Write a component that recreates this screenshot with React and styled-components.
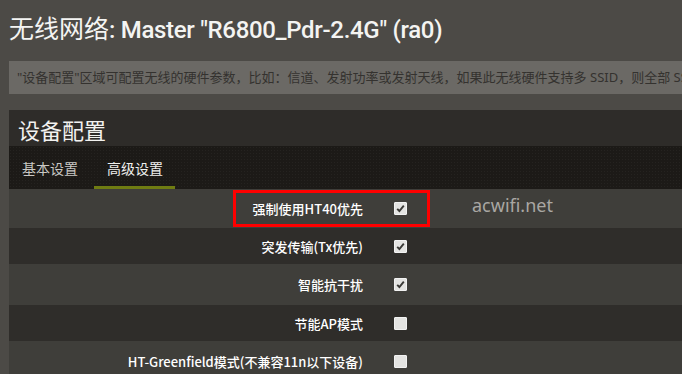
import styled, { createGlobalStyle } from 'styled-components';

const GlobalStyle = createGlobalStyle`
  html, body {
    margin: 0;
    padding: 0;
    background: #4c4a46;
    overflow: hidden;
  }
  body {
    font-family: "Noto Sans", "Noto Sans CJK SC", sans-serif;
  }
`;

const rows = [
  { label: '强制使用HT40优先', checked: true, height: 39 },
  { label: '突发传输(Tx优先)', checked: true, height: 36 },
  { label: '智能抗干扰', checked: true, height: 41 },
  { label: '节能AP模式', checked: false, height: 36 },
  { label: 'HT-Greenfield模式(不兼容11n以下设备)', checked: false, height: 40 },
];

function Checkbox({ checked }) {
  return (
    <Box>
      {checked && (
        <svg width="9" height="9" viewBox="0 0 9 9">
          <path d="M1.2 4.8 L3.4 7 L7.8 1.6" fill="none" stroke="#3a3936" strokeWidth="1.9" />
        </svg>
      )}
    </Box>
  );
}

function App() {
  return (
    <>
      <GlobalStyle />
      <Page>
        <Title>
          <Cjk>无线网络</Cjk>: Master "R6800_Pdr-2.4G" (ra0)
        </Title>
        <Description>
          "设备配置"区域可配置无线的硬件参数，比如：信道、发射功率或发射天线，如果此无线硬件支持多 SSID，则全部 SSID 将共享此设备配置。
        </Description>
        <Section>
          <SectionHeader>设备配置</SectionHeader>
          <Tabs>
            <Tab>基本设置</Tab>
            <Tab $active>高级设置</Tab>
          </Tabs>
          <Rows>
            {rows.map((row, i) => (
              <Row key={row.label} $odd={i % 2 === 1} $h={row.height}>
                <Label>{row.label}</Label>
                <Field>
                  <Checkbox checked={row.checked} />
                </Field>
              </Row>
            ))}
            <Highlight />
            <Watermark>acwifi.net</Watermark>
          </Rows>
        </Section>
      </Page>
    </>
  );
}

const Page = styled.div`
  width: 780px;
  padding: 0 0 0 9px;
`;

const Title = styled.h2`
  margin: 0;
  padding: 9px 0 0 0;
  height: 47px;
  box-sizing: border-box;
  font-family: Roboto, "Noto Sans CJK SC", sans-serif;
  font-weight: 500;
  font-size: 24px;
  letter-spacing: -0.3px;
  color: #f4f4f2;
  white-space: nowrap;
`;

const Cjk = styled.span`
  font-family: "Noto Sans CJK SC", sans-serif;
  font-size: 25px;
  font-weight: 400;
  letter-spacing: 0;
`;

const Description = styled.div`
  margin-top: 14px;
  height: 33px;
  line-height: 33px;
  padding-left: 8px;
  background: #6b6965;
  color: #34322f;
  font-size: 13px;
  white-space: nowrap;
  overflow: hidden;
`;

const Section = styled.div`
  margin-top: 16px;
  background: #2e2c29;
`;

const SectionHeader = styled.div`
  height: 36px;
  line-height: 38px;
  padding-left: 9px;
  font-family: "Noto Sans CJK SC", sans-serif;
  font-size: 22px;
  color: #f2f2f0;
`;

const Tabs = styled.div`
  display: flex;
  height: 43px;
  gap: 4px;
  background-color: #1c1a17;
  background-image: radial-gradient(rgba(255, 255, 255, 0.04) 1px, transparent 1px);
  background-size: 3px 3px;
`;

const Tab = styled.div`
  padding: 0 12px 0 13px;
  display: flex;
  align-items: center;
  font-family: "Noto Sans CJK SC", sans-serif;
  font-size: 14px;
  color: ${(p) => (p.$active ? '#f0f0ee' : '#c9c8c4')};
  border-bottom: 3px solid ${(p) => (p.$active ? '#6f7c12' : 'transparent')};
  box-sizing: border-box;
  padding-top: 3px;
`;

const Rows = styled.div`
  position: relative;
`;

const Row = styled.div`
  display: flex;
  align-items: center;
  height: ${(p) => p.$h}px;
  background: ${(p) => (p.$odd ? '#2f2d2a' : '#3f3e3a')};
`;

const Label = styled.div`
  width: 354px;
  text-align: right;
  font-family: "Noto Sans CJK SC", sans-serif;
  font-size: 13px;
  font-weight: 500;
  color: #ffffff;
  white-space: nowrap;
`;

const Field = styled.div`
  padding-left: 31px;
  display: flex;
  align-items: center;
`;

const Box = styled.span`
  width: 11px;
  height: 11px;
  border: 1px solid #f2f2f2;
  background: #e4e4e2;
  border-radius: 1px;
  display: flex;
  align-items: center;
  justify-content: center;
`;

const Highlight = styled.div`
  position: absolute;
  left: 224px;
  top: 1px;
  width: 191px;
  height: 31px;
  border: 3px solid #ff0000;
  pointer-events: none;
`;

const Watermark = styled.div`
  position: absolute;
  left: 463px;
  top: 4px;
  font-family: "Noto Sans", sans-serif;
  font-size: 18px;
  color: #a9a7a3;
`;

export default App;
